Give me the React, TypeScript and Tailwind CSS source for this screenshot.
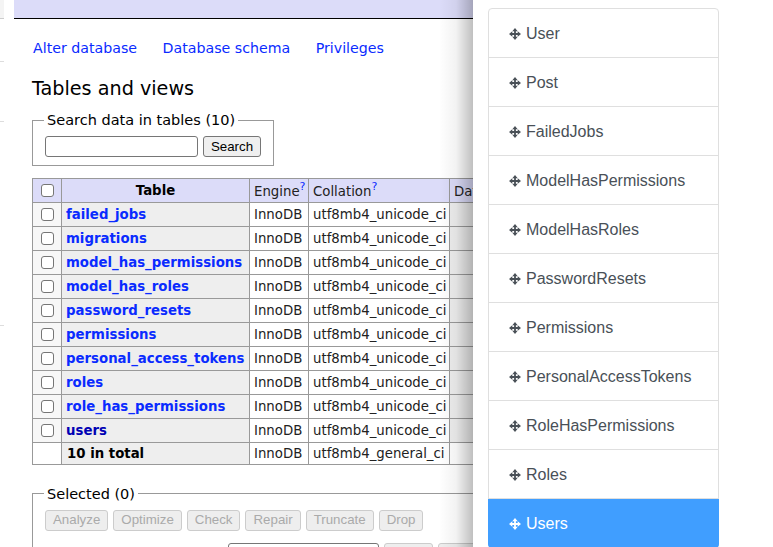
import React from 'react';

const tables = [
  'failed_jobs',
  'migrations',
  'model_has_permissions',
  'model_has_roles',
  'password_resets',
  'permissions',
  'personal_access_tokens',
  'roles',
  'role_has_permissions',
  'users',
];

const models = [
  'User',
  'Post',
  'FailedJobs',
  'ModelHasPermissions',
  'ModelHasRoles',
  'PasswordResets',
  'Permissions',
  'PersonalAccessTokens',
  'RoleHasPermissions',
  'Roles',
  'Users',
];

const actions = ['Analyze', 'Optimize', 'Check', 'Repair', 'Truncate', 'Drop'];

const Box = () => (
  <span className="block w-[13px] h-[13px] mx-auto bg-white border border-[#767676] rounded-[3px]" />
);

const MoveIcon = () => (
  <svg viewBox="0 0 12 12" className="w-3 h-3 shrink-0 fill-current">
    <path d="M6 0 8.700 3.300H6.900V5.100H8.700V3.300L12 6 8.700 8.700V6.900H6.900V8.700H8.700L6 12 3.300 8.700H5.100V6.900H3.300V8.700L0 6 3.300 3.300V5.100H5.100V3.300H3.300Z" />
  </svg>
);

const App = () => {
  return (
    <div className="relative w-[773px] h-[547px] overflow-hidden flex bg-white font-['DejaVu_Sans',sans-serif] text-black">
      {/* sidebar edge */}
      <div className="w-[14px] shrink-0 flex flex-col">
        <div className="w-[4px] h-[19px] bg-[#f4f4f4] border-b border-[#cccccc]" />
        <div className="w-[4px] h-[43px] border-b border-[#dddddd]" />
        <div className="w-[4px] h-[60px] border-b border-[#dddddd]" />
        <div className="w-[4px] h-[204px] border-b border-[#dddddd]" />
      </div>

      {/* database page */}
      <div className="relative w-[459px] shrink-0 overflow-hidden">
        <div className="h-[19px] bg-[#dcdcf9] border-b border-black" />
        <div className="pl-[18px] w-[700px]">
          <div className="flex gap-[25.5px] ml-[1px] mt-[20px] text-[14.2px] leading-[18px] text-[#0a2bff]">
            <span>Alter database</span>
            <span>Database schema</span>
            <span>Privileges</span>
          </div>
          <h2 className="mt-[20px] text-[19.2px] leading-[24px]">Tables and views</h2>

          <fieldset className="mt-[11px] w-[242px] h-[54px] border border-[#999999] px-3">
            <legend className="px-[3px] -ml-[1px] text-[14.5px] leading-[16px]">Search data in tables (10)</legend>
            <div className="flex items-center gap-[5px] mt-[8px]">
              <span className="w-[153px] h-[21px] border border-[#767676] rounded-[3px] bg-white" />
              <span className="w-[58px] h-[21px] flex items-center justify-center border border-[#767676] rounded-[3px] bg-[#efefef] font-['Liberation_Sans',sans-serif] text-[13.3px]">
                Search
              </span>
            </div>
          </fieldset>

          <table className="mt-[12px] border-collapse text-[13.3px]">
            <thead>
              <tr className="h-[24px] bg-[#dcdcf9]">
                <td className="w-[29px] border border-[#999999] p-0"><Box /></td>
                <th className="w-[188px] border border-[#999999] text-center font-bold p-0 leading-[16px]">Table</th>
                <td className="w-[59px] border border-[#999999] pl-[4px] pt-[2px] text-[#222222]">
                  Engine<sup className="text-[#0a2bff] text-[11px] -top-[6px]">?</sup>
                </td>
                <td className="w-[141px] border border-[#999999] pl-[4px] pt-[2px] text-[#222222]">
                  Collation<sup className="text-[#0a2bff] text-[11px] -top-[6px]">?</sup>
                </td>
                <td className="w-[60px] border border-[#999999] pl-[4px] pt-[2px] text-[#222222]">Data</td>
              </tr>
            </thead>
            <tbody>
              {tables.map((name) => (
                <tr key={name} className="h-[24px]">
                  <td className="border border-[#999999] bg-[#f7f7f7] p-0"><Box /></td>
                  <th className="border border-[#999999] bg-[#eeeeee] text-left pl-[4px] p-0 font-bold">
                    <span className={name === 'users' ? 'text-[#0000b4]' : 'text-[#0a2bff]'}>{name}</span>
                  </th>
                  <td className="border border-[#999999] pl-[4px] text-[#222222]">InnoDB</td>
                  <td className="border border-[#999999] pl-[4px] text-[#222222]">utf8mb4_unicode_ci</td>
                  <td className="border border-[#999999] bg-[#eeeeee]" />
                </tr>
              ))}
              <tr className="h-[21px]">
                <td className="border border-[#999999] p-0" />
                <th className="border border-[#999999] bg-[#eeeeee] text-left pl-[5px] pt-[1px] font-bold">10 in total</th>
                <td className="border border-[#999999] pl-[4px] pt-[1px] text-[#222222]">InnoDB</td>
                <td className="border border-[#999999] pl-[4px] pt-[1px] text-[#222222]">utf8mb4_general_ci</td>
                <td className="border border-[#999999]" />
              </tr>
            </tbody>
          </table>

          <fieldset className="mt-[21px] w-[500px] h-[80px] border border-[#999999] px-3">
            <legend className="px-[3px] -ml-[1px] text-[14.5px] leading-[16px]">Selected (0)</legend>
            <div className="flex gap-[5px] mt-[8px]">
              {actions.map((a) => (
                <span
                  key={a}
                  className="h-[21px] px-[7px] flex items-center border border-[#cccccc] rounded-[3px] bg-[#eeeeee] text-[#aaaaaa] font-['Liberation_Sans',sans-serif] text-[13.3px]"
                >
                  {a}
                </span>
              ))}
            </div>
            <div className="flex items-center mt-[12px] text-[14.5px] leading-[18px]">
              <span className="w-[183px]">Move to other database:</span>
              <span className="w-[151px] h-[21px] border border-[#767676] rounded-[3px] text-[13px] pl-1">Shop</span>
              <span className="ml-[5px] w-[49px] h-[21px] border border-[#cccccc] rounded-[3px] bg-[#eeeeee]" />
              <span className="ml-[5px] w-[49px] h-[21px] border border-[#cccccc] rounded-[3px] bg-[#eeeeee]" />
            </div>
          </fieldset>
        </div>

        {/* drawer shadow falling on the page */}
        <div className="absolute inset-y-0 right-0 w-[34px] bg-gradient-to-r from-black/0 via-black/5 to-black/25" />
      </div>

      {/* drawer */}
      <div className="flex-1 bg-white pl-[15px] pt-2 font-['Liberation_Sans',sans-serif] text-[16px] text-[#495057]">
        <ul className="w-[231px] border border-[#dfdfdf] rounded-[4px]">
          {models.map((m) => (
            <li
              key={m}
              className={
                m === 'Users'
                  ? 'h-[49px] -mx-px -mb-px px-[21px] flex items-center gap-[5px] bg-[#409eff] text-white rounded-b-[4px]'
                  : 'h-[49px] pt-[2px] px-5 flex items-center gap-[5px] border-b border-[#dfdfdf]'
              }
            >
              <MoveIcon />
              <span>{m}</span>
            </li>
          ))}
        </ul>
      </div>
    </div>
  );
};

export default App;
